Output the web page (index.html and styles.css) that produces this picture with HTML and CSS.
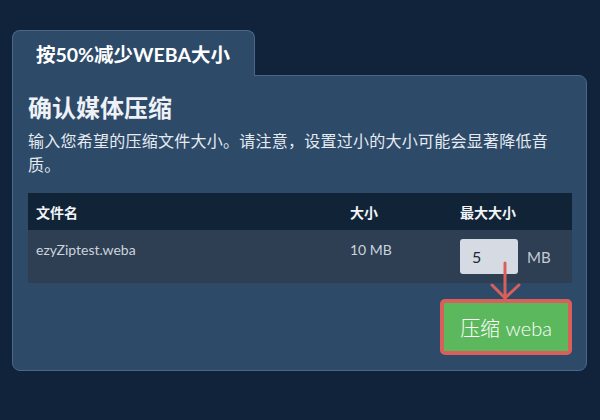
FILE: index.html
```html
<!DOCTYPE html>
<html lang="zh">
<head>
<meta charset="utf-8">
<link rel="stylesheet" href="styles.css">
</head>
<body>
<div class="page">
  <div class="tab">按50%减少WEBA大小</div>
  <div class="panel">
    <h1 class="title">确认媒体压缩</h1>
    <p class="desc">输入您希望的压缩文件大小。请注意，设置过小的大小可能会显著降低音质。</p>
    <table class="files">
      <thead>
        <tr><th class="c-name">文件名</th><th class="c-size">大小</th><th class="c-max">最大大小</th></tr>
      </thead>
      <tbody>
        <tr>
          <td class="c-name">ezyZiptest.weba</td>
          <td class="c-size">10 MB</td>
          <td class="c-max"><div class="maxbox"><span class="input">5</span><span class="unit">MB</span></div></td>
        </tr>
      </tbody>
    </table>
    <div class="actions">
      <button class="btn">压缩 weba</button>
    </div>
  </div>
  <svg class="arrow" width="34" height="42" viewBox="0 0 34 42">
    <path d="M15 2 V36" stroke="#d9605a" stroke-width="3" fill="none" stroke-linecap="round"/>
    <path d="M2 24 L15 37 L29 24" stroke="#d9605a" stroke-width="3" fill="none" stroke-linecap="round" stroke-linejoin="round"/>
  </svg>
</div>
</body>
</html>
```

FILE: styles.css
```css
html, body {
  margin: 0;
  padding: 0;
  background: #11233a;
}
body {
  font-family: Lato, "Noto Sans CJK SC", sans-serif;
  color: #e8edf3;
}
.page {
  position: relative;
  padding: 30px 0 0 12px;
  width: 575px;
}
.tab {
  position: relative;
  z-index: 2;
  width: 218px;
  height: 45px;
  box-sizing: content-box;
  background: #2d4a69;
  border: 1px solid #4b6687;
  border-bottom: none;
  border-radius: 8px 8px 0 0;
  margin-bottom: -1px;
  padding: 0 0 0 23px;
  display: flex;
  align-items: center;
  font-size: 19.5px;
  font-weight: 700;
  color: #ffffff;
}
.panel {
  position: relative;
  z-index: 1;
  background: #2d4a69;
  border: 1px solid #4b6687;
  border-radius: 0 8px 8px 8px;
  padding: 16px 14px 15px 15px;
}
.title {
  margin: 0;
  font-size: 24px;
  line-height: 32px;
  font-weight: 700;
  color: #eef1f5;
}
.desc {
  max-width: 530px;
  margin: 5px 0 16px 0;
  font-size: 16px;
  line-height: 24px;
  letter-spacing: 0.25px;
  color: #e6ebf1;
}
.files {
  width: 544px;
  border-collapse: collapse;
  font-size: 14px;
}
.files th {
  background: #112337;
  color: #f2f4f7;
  font-weight: 700;
  text-align: left;
  height: 37px;
  padding: 0 8px;
  box-sizing: border-box;
}
.files td {
  background: #2e3e53;
  color: #cbd3dc;
  vertical-align: top;
  padding: 10px 8px 9px;
  line-height: 20px;
}
.files td.c-max {
  padding-top: 9px;
}
.c-name { width: 298px; }
.c-size { width: 94px; }
.maxbox {
  display: flex;
  align-items: center;
  gap: 9px;
}
.input {
  box-sizing: border-box;
  width: 58px;
  height: 35px;
  background: #d6dbe3;
  border-radius: 3px;
  padding: 0 12px;
  display: flex;
  align-items: center;
  color: #1b2635;
  font-size: 16px;
}
.unit {
  color: #c3cbd5;
  font-size: 15px;
}
.actions {
  display: flex;
  justify-content: flex-end;
  width: 544px;
  margin-top: 16px;
}
.btn {
  box-sizing: border-box;
  width: 132px;
  height: 56px;
  background: #5cb85c;
  border: 4px solid #d9605a;
  border-radius: 5px;
  color: #ffffff;
  font-family: Lato, "Noto Sans CJK SC", sans-serif;
  font-size: 20px;
  font-weight: 300;
  padding: 0;
}
.arrow {
  position: absolute;
  left: 490px;
  top: 261px;
  z-index: 3;
}
```
